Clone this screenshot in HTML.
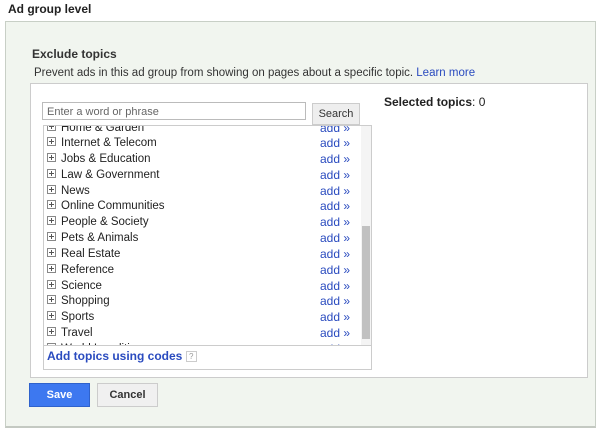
<!DOCTYPE html>
<html><head><style>
body{margin:0;width:600px;height:438px;background:#fff;font-family:"Liberation Sans",sans-serif;position:relative;overflow:hidden;color:#222}
.a{position:absolute}
.row{position:absolute;left:3px;height:16px;font-size:11.5px;line-height:16px;width:320px;white-space:nowrap}
.pl{display:inline-block;width:7px;height:7px;border:1px solid #888;position:relative;margin-right:5px;vertical-align:0px;background:#fff}
.pl:before{content:"";position:absolute;left:1px;right:1px;top:3px;height:1px;background:#555}
.pl:after{content:"";position:absolute;top:1px;bottom:1px;left:3px;width:1px;background:#555}
.add{position:absolute;left:273px;color:#2a4bbf;font-size:12px}
</style></head><body>
<div class="a" style="left:8px;top:2px;font-size:12px;font-weight:bold;color:#222">Ad group level</div>
<div class="a" style="left:5px;top:21px;width:589px;height:404px;background:#f1f5ef;border:1px solid #c8cfc6;border-bottom:2px solid #c4c9c2"></div>
<div class="a" style="left:32px;top:47px;font-size:12px;font-weight:bold;color:#333">Exclude topics</div>
<div class="a" style="left:34px;top:67px;font-size:11.5px;color:#333">Prevent ads in this ad group from showing on pages about a specific topic. <span style="color:#2a4bbf">Learn more</span></div>
<div class="a" style="left:30px;top:83px;width:556px;height:293px;background:#fff;border:1px solid #ccc"></div>
<div class="a" style="left:384px;top:95px;font-size:12px;color:#222"><b>Selected topics</b>: 0</div>
<div class="a" style="left:42px;top:102px;width:264px;height:18px;border:1px solid #bbb;background:#fff;font-size:11px;line-height:18px;color:#666;padding-left:4px;box-sizing:border-box">Enter a word or phrase</div>
<div class="a" style="left:312px;top:103px;width:46px;height:20px;border:1px solid #ccc;background:#eee;font-size:11px;line-height:20px;text-align:center;color:#333">Search</div>
<div class="a" style="left:43px;top:125px;width:327px;height:243px;border:1px solid #ccc;overflow:hidden;background:#fff">
<div class="row" style="top:-6px"><span class="pl"></span>Home &amp; Garden<span class="add">add »</span></div>
<div class="row" style="top:9px"><span class="pl"></span>Internet &amp; Telecom<span class="add">add »</span></div>
<div class="row" style="top:25px"><span class="pl"></span>Jobs &amp; Education<span class="add">add »</span></div>
<div class="row" style="top:41px"><span class="pl"></span>Law &amp; Government<span class="add">add »</span></div>
<div class="row" style="top:57px"><span class="pl"></span>News<span class="add">add »</span></div>
<div class="row" style="top:72px"><span class="pl"></span>Online Communities<span class="add">add »</span></div>
<div class="row" style="top:88px"><span class="pl"></span>People &amp; Society<span class="add">add »</span></div>
<div class="row" style="top:104px"><span class="pl"></span>Pets &amp; Animals<span class="add">add »</span></div>
<div class="row" style="top:120px"><span class="pl"></span>Real Estate<span class="add">add »</span></div>
<div class="row" style="top:136px"><span class="pl"></span>Reference<span class="add">add »</span></div>
<div class="row" style="top:152px"><span class="pl"></span>Science<span class="add">add »</span></div>
<div class="row" style="top:167px"><span class="pl"></span>Shopping<span class="add">add »</span></div>
<div class="row" style="top:183px"><span class="pl"></span>Sports<span class="add">add »</span></div>
<div class="row" style="top:199px"><span class="pl"></span>Travel<span class="add">add »</span></div>
<div class="row" style="top:215px"><span class="pl"></span>World Localities<span class="add">add »</span></div>
<div class="a" style="left:317px;top:0;width:10px;height:220px;background:#f4f4f4"></div>
<div class="a" style="left:318px;top:100px;width:8px;height:113px;background:#c1c1c1"></div>
<div class="a" style="left:0;top:219px;width:327px;height:24px;background:#fff;border-top:1px solid #ccc"></div>
<div class="a" style="left:3px;top:223px;font-size:12px;font-weight:bold;color:#2a4bbf">Add topics using codes <span style="display:inline-block;width:9px;height:9px;border:1px solid #ccc;font-size:8px;line-height:9px;text-align:center;color:#999;font-weight:normal;vertical-align:1px">?</span></div>
</div>
<div class="a" style="left:29px;top:383px;width:61px;height:24px;background:#3d78f0;border:1px solid #2f62cc;box-sizing:border-box;color:#fff;font-size:11px;font-weight:bold;line-height:22px;text-align:center">Save</div>
<div class="a" style="left:97px;top:383px;width:61px;height:24px;background:#f0f0f0;border:1px solid #ccc;box-sizing:border-box;color:#333;font-size:11px;font-weight:bold;line-height:22px;text-align:center">Cancel</div>
</body></html>
